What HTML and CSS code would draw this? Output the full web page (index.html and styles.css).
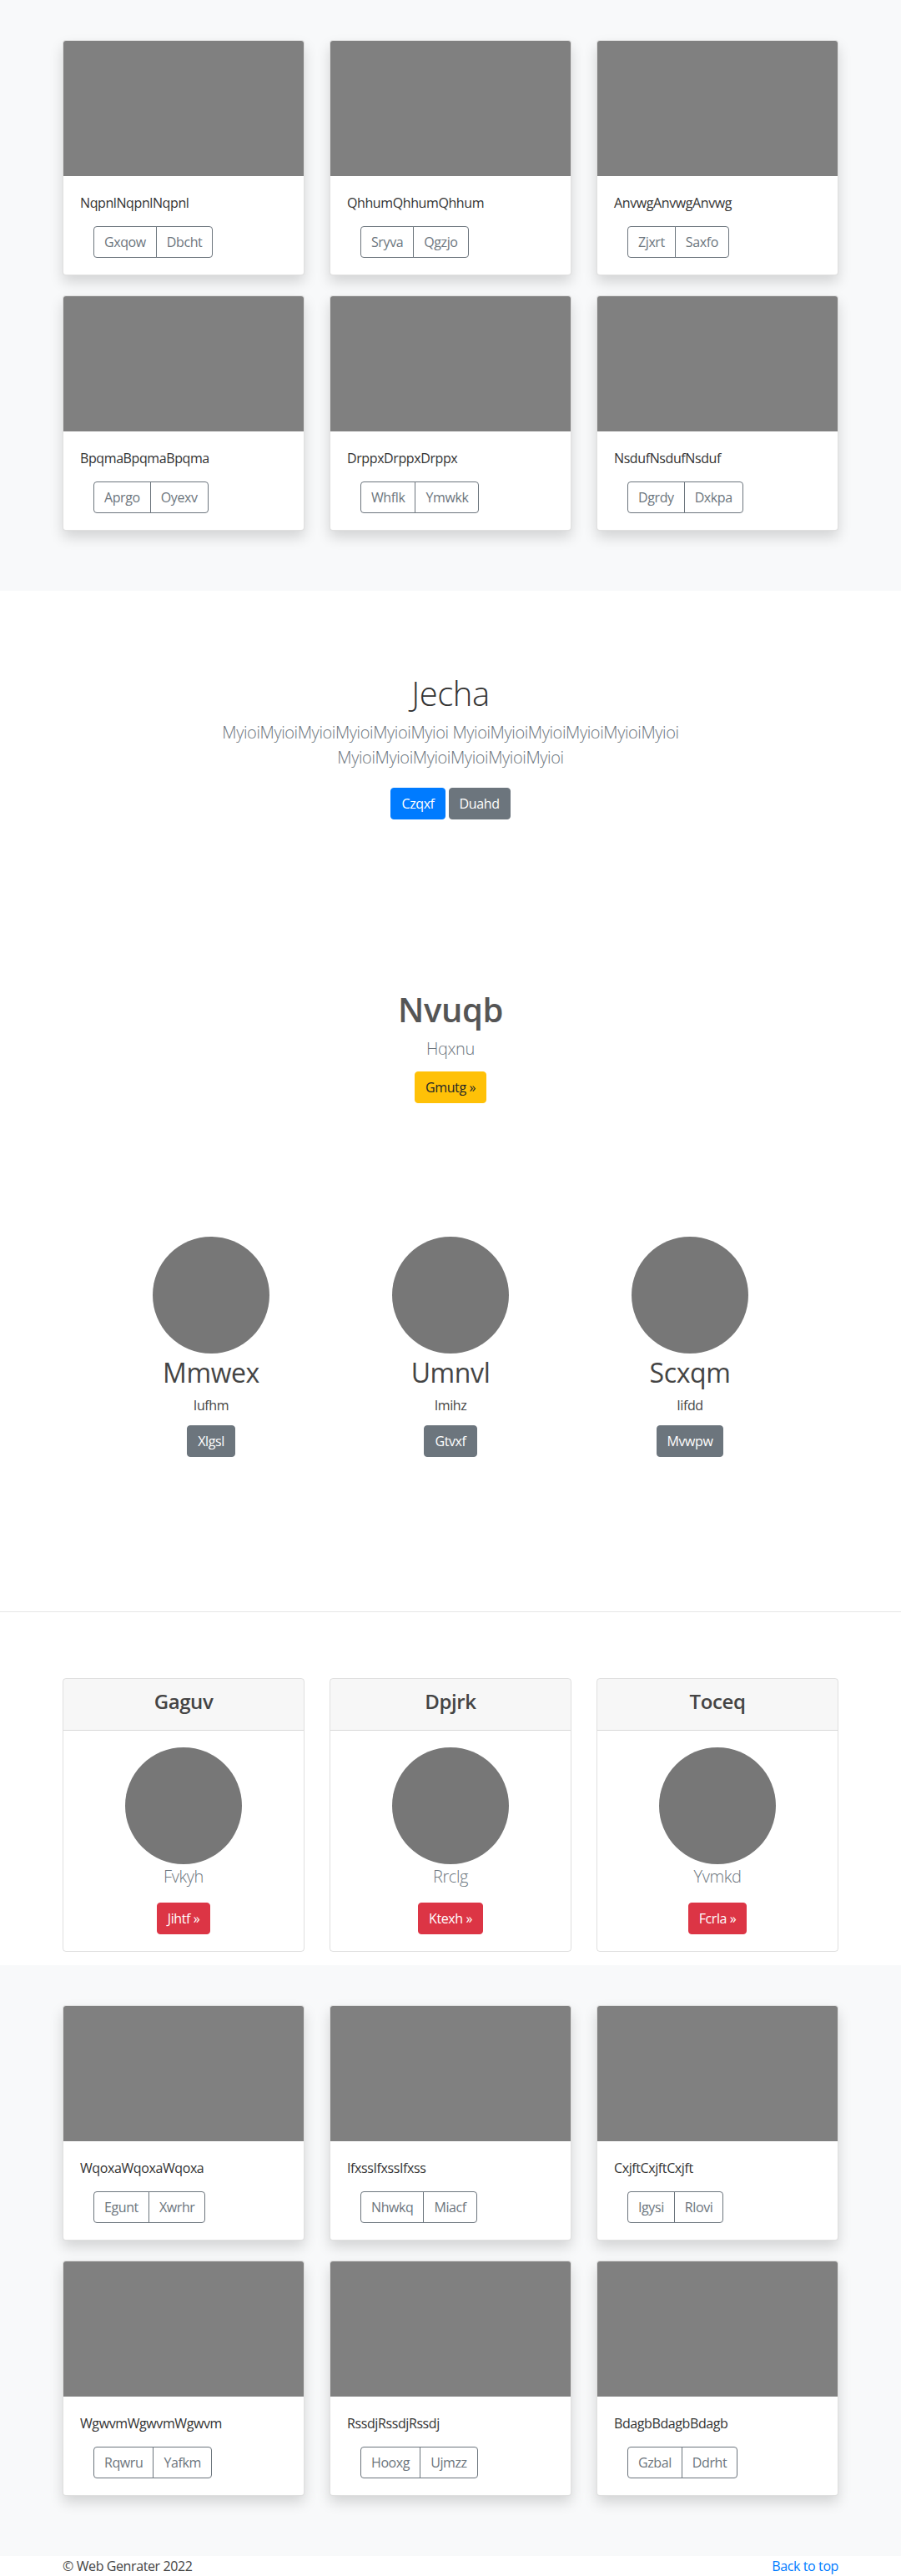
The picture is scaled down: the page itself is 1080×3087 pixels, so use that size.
FILE: index.html
```html
<!DOCTYPE html>
<html lang="en">
<head>
<meta charset="utf-8">
<title>Web Genrater</title>
<link rel="stylesheet" href="styles.css">
</head>
<body>
<section class="album">
  <div class="container">
    <div class="grid3">
      <div class="acard"><div class="aimg"></div><div class="abody"><p class="atext">NqpnlNqpnlNqpnl</p><div class="bgroup"><button class="bo">Gxqow</button><button class="bo">Dbcht</button></div></div></div>
      <div class="acard"><div class="aimg"></div><div class="abody"><p class="atext">QhhumQhhumQhhum</p><div class="bgroup"><button class="bo">Sryva</button><button class="bo">Qgzjo</button></div></div></div>
      <div class="acard"><div class="aimg"></div><div class="abody"><p class="atext">AnvwgAnvwgAnvwg</p><div class="bgroup"><button class="bo">Zjxrt</button><button class="bo">Saxfo</button></div></div></div>
      <div class="acard"><div class="aimg"></div><div class="abody"><p class="atext">BpqmaBpqmaBpqma</p><div class="bgroup"><button class="bo">Aprgo</button><button class="bo">Oyexv</button></div></div></div>
      <div class="acard"><div class="aimg"></div><div class="abody"><p class="atext">DrppxDrppxDrppx</p><div class="bgroup"><button class="bo">Whflk</button><button class="bo">Ymwkk</button></div></div></div>
      <div class="acard"><div class="aimg"></div><div class="abody"><p class="atext">NsdufNsdufNsduf</p><div class="bgroup"><button class="bo">Dgrdy</button><button class="bo">Dxkpa</button></div></div></div>
    </div>
  </div>
</section>

<section class="hero">
  <div class="narrow">
    <h1 class="hero-title">Jecha</h1>
    <p class="lead muted hero-lead">MyioiMyioiMyioiMyioiMyioiMyioi MyioiMyioiMyioiMyioiMyioiMyioi MyioiMyioiMyioiMyioiMyioiMyioi</p>
    <div class="brow">
      <button class="btn primary">Czqxf</button>
      <button class="btn secondary">Duahd</button>
    </div>
  </div>
</section>

<section class="cta">
  <h1 class="cta-title">Nvuqb</h1>
  <p class="lead muted cta-lead">Hqxnu</p>
  <button class="btn warning">Gmutg &raquo;</button>
</section>

<section class="marketing">
  <div class="mcol">
    <div class="circle"></div>
    <h2 class="mname">Mmwex</h2>
    <p class="msub">Iufhm</p>
    <button class="btn secondary">Xlgsl</button>
  </div>
  <div class="mcol">
    <div class="circle"></div>
    <h2 class="mname">Umnvl</h2>
    <p class="msub">Imihz</p>
    <button class="btn secondary">Gtvxf</button>
  </div>
  <div class="mcol">
    <div class="circle"></div>
    <h2 class="mname">Scxqm</h2>
    <p class="msub">Iifdd</p>
    <button class="btn secondary">Mvwpw</button>
  </div>
</section>

<hr class="divider">

<section class="pricing">
  <div class="container">
    <div class="grid3">
      <div class="pcard">
        <div class="phead"><h4 class="ptitle">Gaguv</h4></div>
        <div class="pbody"><div class="circle"></div><p class="lead muted pname">Fvkyh</p><button class="btn danger">Jihtf &raquo;</button></div>
      </div>
      <div class="pcard">
        <div class="phead"><h4 class="ptitle">Dpjrk</h4></div>
        <div class="pbody"><div class="circle"></div><p class="lead muted pname">Rrclg</p><button class="btn danger">Ktexh &raquo;</button></div>
      </div>
      <div class="pcard">
        <div class="phead"><h4 class="ptitle">Toceq</h4></div>
        <div class="pbody"><div class="circle"></div><p class="lead muted pname">Yvmkd</p><button class="btn danger">Fcrla &raquo;</button></div>
      </div>
    </div>
  </div>
</section>

<section class="album">
  <div class="container">
    <div class="grid3">
      <div class="acard"><div class="aimg"></div><div class="abody"><p class="atext">WqoxaWqoxaWqoxa</p><div class="bgroup"><button class="bo">Egunt</button><button class="bo">Xwrhr</button></div></div></div>
      <div class="acard"><div class="aimg"></div><div class="abody"><p class="atext">IfxssIfxssIfxss</p><div class="bgroup"><button class="bo">Nhwkq</button><button class="bo">Miacf</button></div></div></div>
      <div class="acard"><div class="aimg"></div><div class="abody"><p class="atext">CxjftCxjftCxjft</p><div class="bgroup"><button class="bo">Igysi</button><button class="bo">Rlovi</button></div></div></div>
      <div class="acard"><div class="aimg"></div><div class="abody"><p class="atext">WgwvmWgwvmWgwvm</p><div class="bgroup"><button class="bo">Rqwru</button><button class="bo">Yafkm</button></div></div></div>
      <div class="acard"><div class="aimg"></div><div class="abody"><p class="atext">RssdjRssdjRssdj</p><div class="bgroup"><button class="bo">Hooxg</button><button class="bo">Ujmzz</button></div></div></div>
      <div class="acard"><div class="aimg"></div><div class="abody"><p class="atext">BdagbBdagbBdagb</p><div class="bgroup"><button class="bo">Gzbal</button><button class="bo">Ddrht</button></div></div></div>
    </div>
  </div>
</section>

<footer class="footer">
  <div class="container frow">
    <span class="copy">&copy; Web Genrater 2022</span>
    <a class="top" href="#">Back to top</a>
  </div>
</footer>
</body>
</html>
```

FILE: styles.css
```css
* { box-sizing: border-box; }

html, body {
  margin: 0;
  padding: 0;
}

body {
  font-family: "Open Sans", "Noto Sans", "Liberation Sans", sans-serif;
  font-size: 16px;
  line-height: 1.5;
  letter-spacing: -0.025em;
  color: #212529;
  background: #fff;
}

h1, h2, h4, p { margin: 0; }

button {
  font-family: inherit;
  font-size: 16px;
  line-height: 24px;
  letter-spacing: inherit;
  cursor: pointer;
}

.container {
  width: 960px;
  margin: 0 auto;
  padding: 0 15px;
}

.grid3 {
  display: grid;
  grid-template-columns: repeat(3, 290px);
  column-gap: 30px;
}

/* album */
.album {
  background: #f8f9fa;
  padding: 48px 0;
}

.acard {
  background: #fff;
  border: 1px solid rgba(0, 0, 0, 0.125);
  border-radius: 4px;
  overflow: hidden;
  box-shadow: 0 8px 16px rgba(0, 0, 0, 0.15);
  margin-bottom: 24px;
}

.aimg {
  height: 162px;
  background: #808080;
}

.abody {
  padding: 20px;
}

.atext {
  margin-bottom: 16px;
  color: #333;
}

.bgroup {
  display: flex;
  margin-left: 16px;
}

.bo {
  background: transparent;
  color: #6c757d;
  border: 1px solid #6c757d;
  padding: 6px 12px;
  border-radius: 0;
}

.bo:first-child {
  border-radius: 4px 0 0 4px;
}

.bo + .bo {
  margin-left: -1px;
  border-radius: 0 4px 4px 0;
}

/* buttons */
.btn {
  display: inline-block;
  border: 1px solid transparent;
  border-radius: 4px;
  padding: 6px 12px;
  color: #fff;
}

.primary { background: #007bff; border-color: #007bff; }
.secondary { background: #6c757d; border-color: #6c757d; }
.warning { background: #ffc107; border-color: #ffc107; color: #212529; }
.danger { background: #dc3545; border-color: #dc3545; }

.lead {
  font-size: 20px;
  font-weight: 300;
  line-height: 30px;
}

.muted { color: #6c757d; }

/* hero */
.hero {
  padding-top: 99px;
  text-align: center;
}

.narrow {
  width: 640px;
  margin: 0 auto;
  padding: 0 15px;
}

.hero-title {
  font-size: 40px;
  line-height: 48px;
  font-weight: 300;
  color: #333;
  margin-bottom: 8px;
}

.hero-lead {
  margin-bottom: 21px;
}

.brow {
  display: flex;
  justify-content: center;
  gap: 4px;
}

/* cta */
.cta {
  padding-top: 204px;
  text-align: center;
}

.cta-title {
  font-size: 40px;
  line-height: 48px;
  font-weight: 600;
  color: #555;
  margin-bottom: 8px;
}

.cta-lead {
  margin-bottom: 12px;
}

/* marketing */
.marketing {
  width: 861px;
  margin: 0 auto;
  padding-top: 160px;
  display: grid;
  grid-template-columns: repeat(3, 1fr);
  text-align: center;
}

.mcol {
  display: flex;
  flex-direction: column;
  align-items: center;
}

.circle {
  width: 140px;
  height: 140px;
  border-radius: 50%;
  background: #777;
}

.mname {
  font-size: 32px;
  line-height: 38px;
  font-weight: 400;
  color: #444;
  margin-top: 4px;
  margin-bottom: 8px;
}

.msub {
  margin-bottom: 12px;
  color: #444;
}

.divider {
  border: 0;
  border-top: 1px solid rgba(0, 0, 0, 0.1);
  margin: 185px 0 79px;
}

/* pricing */
.pricing {
  padding-bottom: 16px;
}

.pcard {
  border: 1px solid rgba(0, 0, 0, 0.125);
  border-radius: 4px;
  overflow: hidden;
  text-align: center;
}

.phead {
  background: rgba(0, 0, 0, 0.03);
  border-bottom: 1px solid rgba(0, 0, 0, 0.125);
  padding: 12px 20px;
}

.ptitle {
  font-size: 24px;
  line-height: 29px;
  font-weight: 600;
  color: #444;
  margin-bottom: 8px;
}

.pbody {
  padding: 20px;
  display: flex;
  flex-direction: column;
  align-items: center;
}

.pname {
  margin-bottom: 16px;
}

/* footer */
.footer {
  background: #fff;
}

.frow {
  display: flex;
  justify-content: space-between;
  line-height: 24px;
}

.copy { color: #444; }

.top {
  color: #007bff;
  text-decoration: none;
}
```
